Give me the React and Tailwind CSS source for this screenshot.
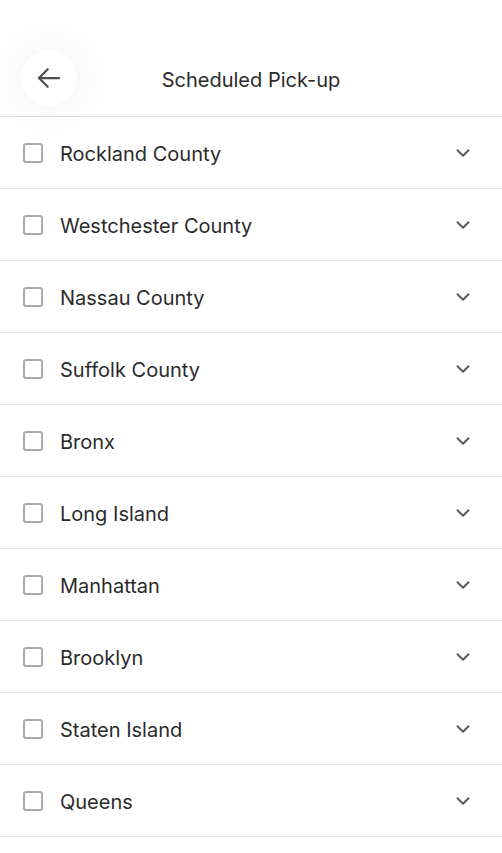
import { ChevronDown } from "lucide-react";

const regions = [
  "Rockland County",
  "Westchester County",
  "Nassau County",
  "Suffolk County",
  "Bronx",
  "Long Island",
  "Manhattan",
  "Brooklyn",
  "Staten Island",
  "Queens",
];

function BackArrow() {
  return (
    <svg width="30" height="30" viewBox="0 0 24 24" fill="none" stroke="#505050" strokeWidth="1.8" strokeLinecap="round" strokeLinejoin="round">
      <path d="M20 12H4" />
      <path d="M11 5l-7 7 7 7" />
    </svg>
  );
}

function RegionRow({ name }) {
  return (
    <div className="flex h-[72px] items-center border-b border-[#e6e6e6] pl-[23px] pr-[28px]">
      <div className="h-[20px] w-[20px] rounded-[3px] border-2 border-[#a9a9a9] bg-white" />
      <span className="ml-[17px] mt-[2px] flex-1 text-[20px] text-[#2b2b2b]">{name}</span>
      <ChevronDown size={22} strokeWidth={2} color="#555" />
    </div>
  );
}

export default function App() {
  return (
    <div className="min-h-[853px] w-[502px] bg-white" style={{ fontFamily: "Inter, 'Noto Sans', sans-serif" }}>
      {/* Header */}
      <div className="relative flex h-[117px] items-end border-b border-[#dcdcdc] pb-[10px]">
        <div className="ml-[21px] flex h-[56px] w-[56px] items-center justify-center rounded-full bg-white shadow-[0_0_40px_rgba(0,0,0,0.07)]">
          <BackArrow />
        </div>
        <h1 className="absolute left-0 right-0 top-[65px] text-center text-[20px] text-[#2b2b2b]">Scheduled Pick-up</h1>
      </div>

      {/* List */}
      <div>
        {regions.map((r) => (
          <RegionRow key={r} name={r} />
        ))}
      </div>
    </div>
  );
}
